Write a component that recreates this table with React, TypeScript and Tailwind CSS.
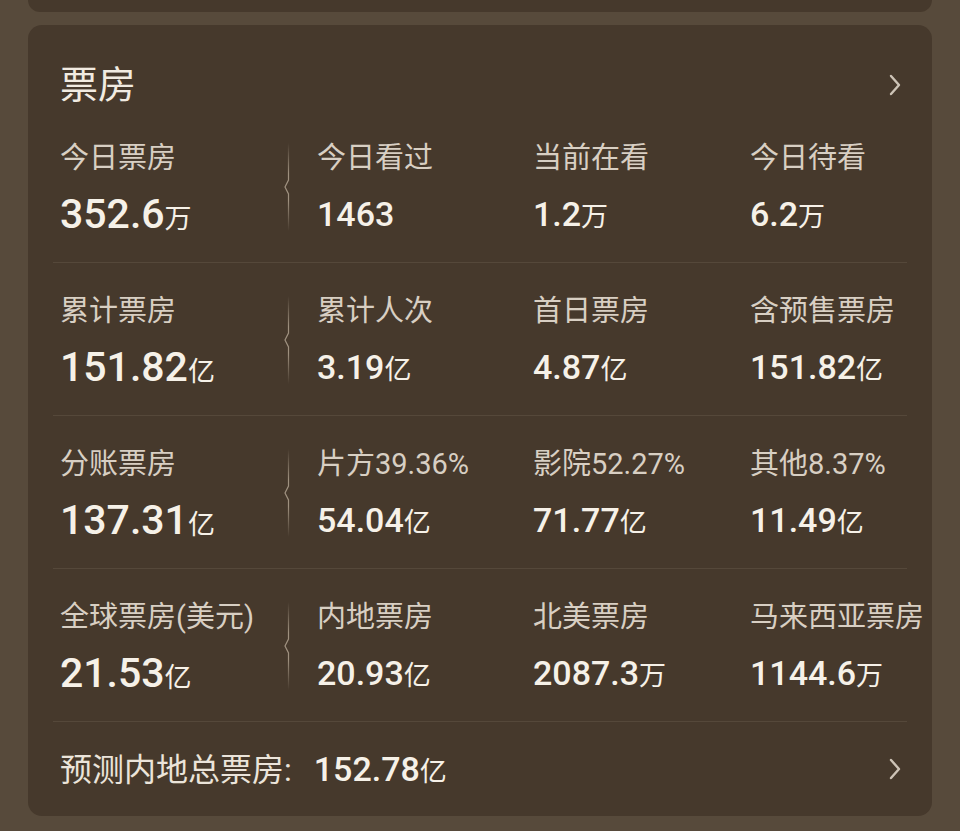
import React from "react";

type Cell = { label: string; value: string; unit: string };

const rows: Cell[][] = [
  [
    { label: "今日票房", value: "352.6", unit: "万" },
    { label: "今日看过", value: "1463", unit: "" },
    { label: "当前在看", value: "1.2", unit: "万" },
    { label: "今日待看", value: "6.2", unit: "万" },
  ],
  [
    { label: "累计票房", value: "151.82", unit: "亿" },
    { label: "累计人次", value: "3.19", unit: "亿" },
    { label: "首日票房", value: "4.87", unit: "亿" },
    { label: "含预售票房", value: "151.82", unit: "亿" },
  ],
  [
    { label: "分账票房", value: "137.31", unit: "亿" },
    { label: "片方39.36%", value: "54.04", unit: "亿" },
    { label: "影院52.27%", value: "71.77", unit: "亿" },
    { label: "其他8.37%", value: "11.49", unit: "亿" },
  ],
  [
    { label: "全球票房(美元)", value: "21.53", unit: "亿" },
    { label: "内地票房", value: "20.93", unit: "亿" },
    { label: "北美票房", value: "2087.3", unit: "万" },
    { label: "马来西亚票房", value: "1144.6", unit: "万" },
  ],
];

const Chevron = () => (
  <svg width="14" height="24" viewBox="0 0 14 24" fill="none">
    <path d="M3 3 L11 12 L3 21" stroke="#cdc3b6" strokeWidth="2.4" strokeLinecap="round" strokeLinejoin="round" />
  </svg>
);

const Notch = ({ id }: { id: string }) => (
  <svg width="8" height="88" viewBox="0 0 8 88" fill="none">
    <defs>
      <linearGradient id={id} x1="0" y1="0" x2="0" y2="88" gradientUnits="userSpaceOnUse">
        <stop offset="0" stopColor="#a99b89" stopOpacity="0" />
        <stop offset="0.35" stopColor="#a99b89" stopOpacity="0.9" />
        <stop offset="0.65" stopColor="#a99b89" stopOpacity="0.9" />
        <stop offset="1" stopColor="#a99b89" stopOpacity="0" />
      </linearGradient>
    </defs>
    <path d="M6.5 0 V37 L3 44 L6.5 51 V88" stroke={`url(#${id})`} strokeWidth="1.2" />
  </svg>
);

const Value = ({ cell, big }: { cell: Cell; big?: boolean }) => (
  <div className="flex items-baseline h-[48px] leading-[48px] text-[#f6f1e8]">
    <span className={big ? "text-[41px] font-medium" : "text-[34px] font-medium"}>{cell.value}</span>
    {cell.unit && <span className="text-[27px]">{cell.unit}</span>}
  </div>
);

export default function App() {
  return (
    <div
      className="w-full min-h-[831px] bg-[#574a3b] px-[28px]"
      style={{ fontFamily: "Roboto, 'Noto Sans CJK SC', sans-serif" }}
    >
      <div className="h-[12px] rounded-b-[14px] bg-[#46392c]" />
      <div className="mt-[13px] rounded-[14px] bg-[#46392c]">
        <div className="flex items-center justify-between pl-[32px] pr-[30px] pt-[42px]">
          <h2 className="text-[38px] leading-[36px] text-[#f1ebe1]">票房</h2>
          <Chevron />
        </div>
        <div className="mt-[7px] mx-[25px]">
          {rows.map((row, i) => (
            <div
              key={i}
              className="grid grid-cols-[222px_35px_216px_217px_1fr] h-[153px] border-b border-[#55483a] px-[7px]"
            >
              <div className="pt-[30px]">
                <div className="text-[29px] leading-[36px] text-[#d8cfc3] whitespace-nowrap">{row[0].label}</div>
                <div className="mt-[14px]">
                  <Value cell={row[0]} big />
                </div>
              </div>
              <div className="pt-[33px]">
                <Notch id={`notch-${i}`} />
              </div>
              {row.slice(1).map((cell) => (
                <div key={cell.label} className="pt-[30px]">
                  <div className="text-[29px] leading-[36px] text-[#d8cfc3] whitespace-nowrap">{cell.label}</div>
                  <div className="mt-[14px]">
                    <Value cell={cell} />
                  </div>
                </div>
              ))}
            </div>
          ))}
          <div className="flex items-center justify-between h-[94px] pl-[7px] pr-[5px]">
            <div className="flex items-baseline">
              <span className="text-[32px] text-[#ebe4da]">预测内地总票房:</span>
              <span className="ml-[22px] text-[34px] font-medium text-[#f6f1e8]">152.78</span>
              <span className="text-[27px] text-[#f6f1e8]">亿</span>
            </div>
            <Chevron />
          </div>
        </div>
      </div>
    </div>
  );
}
